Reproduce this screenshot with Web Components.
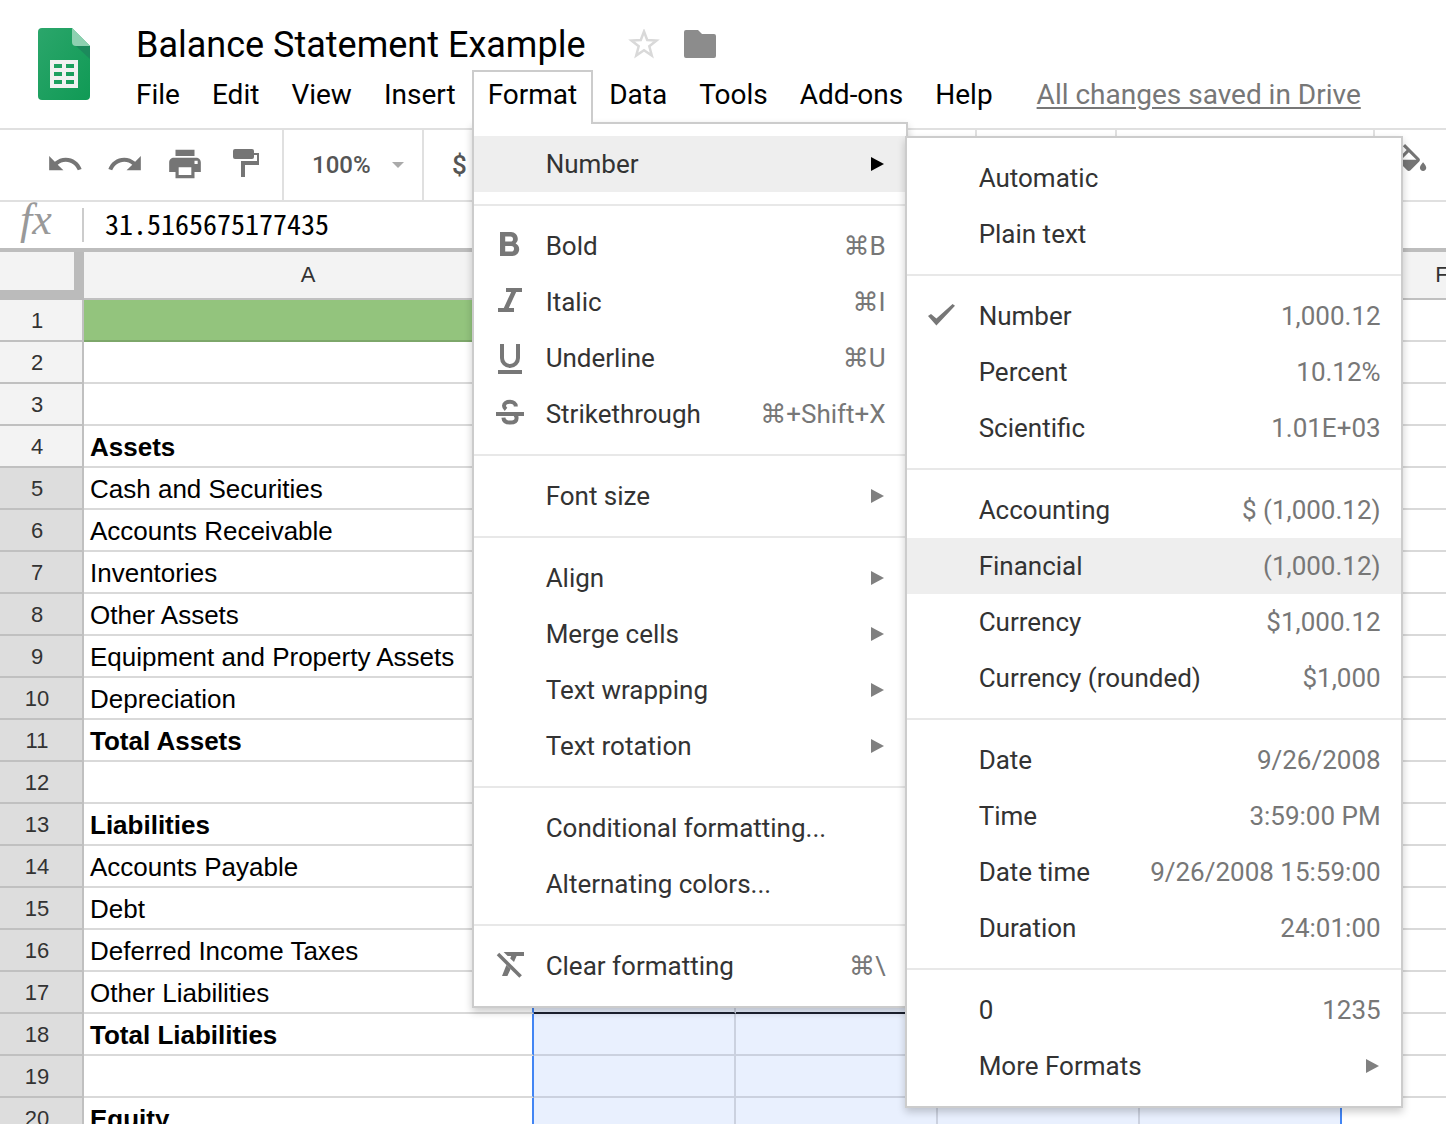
<!DOCTYPE html>
<html lang="en">
<head>
<meta charset="utf-8">
<title>Balance Statement Example</title>
<style>
  html, body {
    height: 100%;
    margin: 0;
  }
  body {
    overflow: hidden;
    background: #fff;
    color: #000;
    font-family: Roboto, "Liberation Sans", sans-serif;
  }
</style>
</head>
<body>
<sheet-app>
  <doc-header slot="header" name="Balance Statement Example">
    <menu-tab label="File"></menu-tab>
    <menu-tab label="Edit"></menu-tab>
    <menu-tab label="View"></menu-tab>
    <menu-tab label="Insert"></menu-tab>
    <menu-tab label="Format" open>
      <popup-menu>
        <menu-item label="Number" submenu active>
          <popup-menu slot="submenu" wide>
            <menu-item label="Automatic"></menu-item>
            <menu-item label="Plain text"></menu-item>
            <menu-line></menu-line>
            <menu-item label="Number" hint="1,000.12" icon="check"></menu-item>
            <menu-item label="Percent" hint="10.12%"></menu-item>
            <menu-item label="Scientific" hint="1.01E+03"></menu-item>
            <menu-line></menu-line>
            <menu-item label="Accounting" hint="$ (1,000.12)"></menu-item>
            <menu-item label="Financial" hint="(1,000.12)" active></menu-item>
            <menu-item label="Currency" hint="$1,000.12"></menu-item>
            <menu-item label="Currency (rounded)" hint="$1,000"></menu-item>
            <menu-line></menu-line>
            <menu-item label="Date" hint="9/26/2008"></menu-item>
            <menu-item label="Time" hint="3:59:00 PM"></menu-item>
            <menu-item label="Date time" hint="9/26/2008 15:59:00"></menu-item>
            <menu-item label="Duration" hint="24:01:00"></menu-item>
            <menu-line></menu-line>
            <menu-item label="0" hint="1235"></menu-item>
            <menu-item label="More Formats" submenu></menu-item>
          </popup-menu>
        </menu-item>
        <menu-line></menu-line>
        <menu-item label="Bold" hint="⌘B" icon="bold"></menu-item>
        <menu-item label="Italic" hint="⌘I" icon="italic"></menu-item>
        <menu-item label="Underline" hint="⌘U" icon="underline"></menu-item>
        <menu-item label="Strikethrough" hint="⌘+Shift+X" icon="strike"></menu-item>
        <menu-line></menu-line>
        <menu-item label="Font size" submenu></menu-item>
        <menu-line></menu-line>
        <menu-item label="Align" submenu></menu-item>
        <menu-item label="Merge cells" submenu></menu-item>
        <menu-item label="Text wrapping" submenu></menu-item>
        <menu-item label="Text rotation" submenu></menu-item>
        <menu-line></menu-line>
        <menu-item label="Conditional formatting..."></menu-item>
        <menu-item label="Alternating colors..."></menu-item>
        <menu-line></menu-line>
        <menu-item label="Clear formatting" hint="⌘\" icon="clear"></menu-item>
      </popup-menu>
    </menu-tab>
    <menu-tab label="Data"></menu-tab>
    <menu-tab label="Tools"></menu-tab>
    <menu-tab label="Add-ons"></menu-tab>
    <menu-tab label="Help"></menu-tab>
  </doc-header>
  <tool-bar slot="toolbar"></tool-bar>
  <formula-bar slot="formula" value="31.5165675177435"></formula-bar>
  <sheet-grid></sheet-grid>
</sheet-app>

<script>
const svg = (box, body) => `<svg viewBox="0 0 ${box} ${box}" aria-hidden="true">${body}</svg>`

const ICONS = {
  bold: svg(18, '<path d="M11.8 7.7c.6-.5 1.1-1.2 1.1-2.2 0-2-1.5-3.5-3.4-3.5H4v12h6.2c1.9 0 3.4-1.6 3.4-3.4 0-1.4-.7-2.4-1.8-2.900zM6.600 4.200h2.600a1.300 1.300 0 0 1 0 2.600H6.600zm3 7.600h-3V9h3a1.400 1.400 0 0 1 0 2.800z"/>'),
  italic: svg(18, '<path d="M7 2v2h2.600l-3.700 8H3v2h8v-2H8.400l3.700-8H15V2z"/>'),
  underline: svg(18, '<path d="M5 2v7a4 4 0 0 0 8 0V2" fill="none" stroke="currentColor" stroke-width="2"/><path d="M3 15h12v2H3z"/>'),
  strike: svg(18, '<path d="M11.900 5.200C11.900 3.700 10.700 2.900 9 2.900 7.200 2.900 6 3.700 6 4.900c0 .8.4 1.300 1 1.800M11.500 9.500c.5.4.8.9.8 1.500 0 1.500-1.300 2.300-3.200 2.300-2.200 0-3.300-1-3.400-2.500" fill="none" stroke="currentColor" stroke-width="2"/><path d="M2 8h14v2H2z"/>'),
  clear: svg(18, '<path d="M5.800 2H16v2h-3.700L11 7 9.100 5.200 9.600 4H7.800zM7.200 8.500 9.300 10.500 7.700 14H5z"/><path d="m3 3 11.300 11.300" fill="none" stroke="currentColor" stroke-width="1.800"/>'),
  check: svg(18, '<path d="M1.500 9 3 8l2.700 2.300L13.800 3l1.200.9-9.300 9.900z"/>'),
  undo: svg(24, '<path d="M12.500 8c-2.650 0-5.050 1-6.900 2.600L2 7v9h9l-3.600-3.600c1.400-1.200 3.100-1.900 5.100-1.900 3.500 0 6.500 2.300 7.600 5.500l2.400-.8C21.100 11 17.100 8 12.500 8z"/>'),
  redo: svg(24, '<path d="M18.400 10.600C16.500 9 14.100 8 11.500 8c-4.600 0-8.600 3-10 7.200l2.400.8c1.100-3.200 4.100-5.500 7.600-5.500 2 0 3.700.7 5.100 1.900L13 16h9V7z"/>'),
  print: svg(24, '<path d="M19 8H5c-1.700 0-3 1.300-3 3v6h4v4h12v-4h4v-6c0-1.700-1.300-3-3-3zm-3 11H8v-5h8zm3-7c-.6 0-1 0-1 0v-2h2v2zM18 3H6v4h12z"/>'),
  paint: svg(19, '<rect x="3.500" y="2" width="10.500" height="5" rx="1"/><path d="M13.500 4h3v6h-7v6h-2V8h8V5h-2z"/>'),
  fill: svg(24, '<path d="M16.560 8.940 7.620 0 6.210 1.410l2.380 2.380-5.150 5.150c-.59.590-.59 1.540 0 2.120l5.500 5.500c.290.290.680.440 1.060.440s.770-.150 1.060-.440l5.500-5.500c.590-.580.590-1.530 0-2.120zM5.210 10 10 5.210 14.790 10zM19 11.500s-2 2.170-2 3.500c0 1.100.9 2 2 2s2-.9 2-2c0-1.330-2-3.500-2-3.500z"/>')
}

const LOGO = `
  <svg class="logo" viewBox="0 0 52 72" role="img" aria-label="Sheets">
    <defs>
      <linearGradient id="page" x1="0" y1="0" x2="1" y2="1">
        <stop offset="0" stop-color="#2ba66b"/><stop offset="1" stop-color="#109a55"/>
      </linearGradient>
    </defs>
    <path fill="url(#page)" d="M4 0h30l18 18v50a4 4 0 0 1-4 4H4a4 4 0 0 1-4-4V4a4 4 0 0 1 4-4z"/>
    <path fill="#1c8a5c" d="M38 18h14v13z"/>
    <path fill="#8ed1b1" d="M34 0l18 18H38a4 4 0 0 1-4-4z"/>
    <path fill="#f1f1f1" fill-rule="evenodd" d="M12 32h28v28H12zm4 4v4h8v-4zm12 0v4h8v-4zm-12 8v4h8v-4zm12 0v4h8v-4zm-12 8v4h8v-4zm12 0v4h8v-4z"/>
  </svg>`

class SheetApp extends HTMLElement {
  constructor () {
    super()
    this.attachShadow({mode: 'open'}).innerHTML = `
      <style>
        :host { display: flex; flex-direction: column; height: 100vh; overflow: hidden; }
        .top { position: relative; z-index: 1; }
        main { flex: 1; min-height: 0; overflow: hidden; }
      </style>
      <div class="top"><slot name="header"></slot></div>
      <slot name="toolbar"></slot>
      <slot name="formula"></slot>
      <main><slot></slot></main>
    `
  }
}

class DocHeader extends HTMLElement {
  constructor () {
    super()
    this.attachShadow({mode: 'open'}).innerHTML = `
      <style>
        :host { display: flex; gap: 30px; height: 128px; padding-left: 38px; box-sizing: border-box; }
        .logo { width: 52px; height: 72px; margin-top: 28px; flex: none; }
        .title { display: flex; align-items: center; height: 42px; padding: 24px 0 4px 16px; }
        h1 { margin: 0 43px 0 0; font-size: 36px; line-height: 42px; font-weight: 400; white-space: nowrap; }
        .title button { display: flex; padding: 0; border: 0; background: none; margin-right: 24px; }
        .title svg { width: 32px; height: 32px; }
        nav { display: flex; align-items: flex-start; white-space: nowrap; }
        a { margin-left: 28px; color: #777; font-size: 28px; line-height: 50px; text-underline-offset: 3px; }
      </style>
      ${LOGO}
      <div>
        <div class="title">
          <h1></h1>
          <button aria-label="Star">
            <svg viewBox="0 0 32 32"><path fill="none" stroke="#d9d9d9" stroke-width="2.500" d="m16 2.500 3.200 8.500 9.300.5-7.200 5.800 2.500 9.200-7.800-5.200-7.800 5.200 2.500-9.200-7.200-5.800 9.300-.5z"/></svg>
          </button>
          <button aria-label="Move to folder">
            <svg viewBox="0 0 32 32"><path fill="#8c8c8c" d="M2 1h12l4 4h12a2 2 0 0 1 2 2v20a2 2 0 0 1-2 2H2a2 2 0 0 1-2-2V3a2 2 0 0 1 2-2z"/></svg>
          </button>
        </div>
        <nav><slot></slot><a href="#drive">All changes saved in Drive</a></nav>
      </div>
    `
  }

  connectedCallback () {
    this.shadowRoot.querySelector('h1').textContent = this.getAttribute('name')
  }
}

class MenuTab extends HTMLElement {
  constructor () {
    super()
    this.attachShadow({mode: 'open'}).innerHTML = `
      <style>
        :host { display: block; position: relative; }
        button {
          display: block; height: 54px; padding: 0 14px 6px; border: 2px solid transparent; border-bottom: 0;
          background: none; color: #000; font: 28px/46px Roboto, sans-serif;
        }
        :host([open]) button {
          position: relative; z-index: 2; background: #fff; border-color: #ccc;
        }
        /* the list tucks under the tab, which hides its top border */
        .drop { position: absolute; z-index: 1; left: 0; top: 52px; }
      </style>
      <button></button>
      <div class="drop"><slot></slot></div>
    `
  }

  connectedCallback () {
    const button = this.shadowRoot.querySelector('button')
    button.textContent = this.getAttribute('label')
    if (this.hasAttribute('open')) button.setAttribute('aria-expanded', 'true')
  }
}

class PopupMenu extends HTMLElement {
  constructor () {
    super()
    this.attachShadow({mode: 'open'}).innerHTML = `
      <style>
        :host {
          display: block; box-sizing: border-box; min-width: 436px; padding: 12px 0;
          border: 2px solid #ccc; background: #fff; box-shadow: 0 4px 8px rgba(0, 0, 0, .2);
        }
        :host([wide]) { min-width: 498px; }
      </style>
      <slot></slot>
    `
  }

  connectedCallback () {
    this.setAttribute('role', 'menu')
  }
}

class MenuLine extends HTMLElement {
  constructor () {
    super()
    this.attachShadow({mode: 'open'}).innerHTML = `
      <style>
        :host { display: block; height: 2px; margin: 12px 0; background: #e8e8e8; }
      </style>
    `
  }
}

class MenuItem extends HTMLElement {
  constructor () {
    super()
    this.attachShadow({mode: 'open'}).innerHTML = `
      <style>
        :host { display: block; position: relative; }
        button {
          display: flex; align-items: center; width: 100%; height: 56px; padding: 0 20px 0 18px;
          border: 0; background: none; color: #333; font: 26px/32px Roboto, "DejaVu Sans", sans-serif;
          text-align: left; white-space: nowrap;
        }
        :host([active]) button { background: #eee; }
        .icon { width: 36px; height: 36px; margin-right: 18px; color: #777; }
        svg { display: block; width: 100%; height: 100%; fill: currentColor; }
        .label { flex: 1; }
        .hint { color: #777; }
        .arrow {
          border: 7px solid transparent; border-left: 13px solid #808080; border-right: 0; margin-right: 2px;
        }
        :host([active]) .arrow { border-left-color: #000; }
        .sub { position: absolute; z-index: 3; left: 100%; top: 0; margin-left: -1px; }
      </style>
      <button role="menuitem"><span class="icon"></span><span class="label"></span></button>
      <div class="sub"><slot name="submenu"></slot></div>
    `
  }

  connectedCallback () {
    const button = this.shadowRoot.querySelector('button')
    button.querySelector('.icon').innerHTML = ICONS[this.getAttribute('icon')] || ''
    button.querySelector('.label').textContent = this.getAttribute('label')

    const tail = document.createElement('span')
    tail.className = this.hasAttribute('submenu') ? 'arrow' : 'hint'
    tail.textContent = this.getAttribute('hint') || ''
    button.appendChild(tail)
  }
}

class ToolBar extends HTMLElement {
  constructor () {
    super()
    this.attachShadow({mode: 'open'}).innerHTML = `
      <style>
        :host { display: flex; height: 70px; border: solid #e0e0e0; border-width: 2px 0; overflow: hidden; flex: none; color: #757575; }
        .group { display: flex; align-items: center; flex: none; border-right: 2px solid #e0e0e0; box-sizing: border-box; }
        .edit { gap: 22px; padding: 0 18px 2px 46px; }
        .zoom { width: 140px; padding-left: 28px; }
        .format { width: 553px; padding-left: 28px; }
        .size { width: 140px; }
        .style { width: 258px; }
        .color { border: 0; padding: 0 0 4px 18px; }
        button { display: block; padding: 0; border: 0; background: none; color: inherit; }
        svg { display: block; width: 38px; height: 38px; fill: currentColor; }
        .text { color: #555; font: 500 26px/32px Roboto, sans-serif; }
        select {
          appearance: none; width: 94px; padding: 0; border: 0; background: none;
          color: #555; font: 500 24px/32px Roboto, sans-serif;
        }
        .caret { margin-left: -14px; border: 6px solid transparent; border-top-color: #aaa; border-bottom: 0; pointer-events: none; }
      </style>
      <div class="group edit">
        <button aria-label="Undo">${ICONS.undo}</button>
        <button aria-label="Redo">${ICONS.redo}</button>
        <button aria-label="Print">${ICONS.print}</button>
        <button aria-label="Paint format">${ICONS.paint}</button>
      </div>
      <div class="group zoom">
        <select aria-label="Zoom"><option>100%</option></select><span class="caret"></span>
      </div>
      <div class="group format"><button class="text" aria-label="Format as currency">$</button></div>
      <div class="group size"></div>
      <div class="group style"></div>
      <div class="group color"><button aria-label="Fill color">${ICONS.fill}</button></div>
    `
  }
}

class FormulaBar extends HTMLElement {
  constructor () {
    super()
    this.attachShadow({mode: 'open'}).innerHTML = `
      <style>
        :host { display: flex; align-items: center; height: 46px; border-bottom: 4px solid #bdbdbd; flex: none; }
        label {
          width: 82px; height: 34px; border-right: 2px solid #ccc;
          text-indent: 20px; color: #999; font: italic 44px/24px "Liberation Serif", serif;
        }
        input {
          flex: 1; height: 46px; box-sizing: border-box; padding: 0 0 4px 21px; border: 0; outline: 0;
          background: none; color: #000; font: 28px/40px "Noto Sans Mono CJK SC", "DejaVu Sans Mono", monospace;
        }
      </style>
      <label for="fx">fx</label><input id="fx" type="text">
    `
  }

  connectedCallback () {
    this.shadowRoot.querySelector('input').value = this.getAttribute('value')
  }
}

const COLUMNS = ['A', 'B', 'C', 'D', 'E', 'F']
const ROWS = [
  '', '', '', '*Assets', 'Cash and Securities', 'Accounts Receivable', 'Inventories', 'Other Assets',
  'Equipment and Property Assets', 'Depreciation', '*Total Assets', '', '*Liabilities', 'Accounts Payable',
  'Debt', 'Deferred Income Taxes', 'Other Liabilities', '*Total Liabilities', '', '*Equity'
]

class SheetGrid extends HTMLElement {
  constructor () {
    super()
    this.attachShadow({mode: 'open'}).innerHTML = `
      <style>
        :host { display: block; font-family: "Liberation Sans", Arial, sans-serif; }
        table { width: 1544px; table-layout: fixed; border-collapse: separate; border-spacing: 0; }
        col { width: 202px; }
        col.num { width: 84px; }
        col.first { width: 450px; }
        th, td { box-sizing: border-box; height: 42px; padding: 0; border: solid #d9d9d9; border-width: 0 2px 2px 0; white-space: nowrap; }
        th { border-color: #c0c0c0; background: #f3f3f3; color: #333; font-size: 22px; line-height: 26px; font-weight: 400; }
        thead th { height: 48px; }
        thead td { border: solid #bbb; border-width: 0 10px 10px 0; background: #f3f3f3; }
        tbody th { padding: 2px 8px 0 0; }
        thead th.on, tr.on th { background: #ddd; }
        tbody td { padding: 2px 0 0 6px; font-size: 26px; line-height: 30px; }
        td:nth-child(2) { border-right-color: transparent; }
        tr.fill td:not(:last-child) { background: #93c47d; border-color: #7da76a; }
        tr.fill td:nth-child(2) { border-right-color: #93c47d; }
        tr.on td:nth-child(2) { border-right-color: #4285f4; }
        tr.on td:nth-child(n + 3):nth-child(-n + 6) { background: #e9f0fe; border-color: #cbd1df; }
        tr.on.total td:nth-child(n + 3):nth-child(-n + 6) { border-bottom-color: #1c2130; }
        tr.on td:nth-child(6) { border-right-color: #4285f4 !important; }
      </style>
      <table>
        <colgroup><col class="num"><col class="first"><col span="5"></colgroup>
        <thead>
          <tr><td></td>${COLUMNS.map((name, i) => `<th scope="col" class="${i > 0 && i < 5 ? 'on' : ''}">${name}</th>`).join('')}</tr>
        </thead>
        <tbody>${ROWS.map((text, i) => this.row(text, i + 1)).join('')}</tbody>
      </table>
    `
  }

  row (text, n) {
    const cls = [n === 1 && 'fill', n > 4 && 'on', n === 17 && 'total'].filter(Boolean).join(' ')
    const cell = text.startsWith('*') ? `<b>${text.slice(1)}</b>` : text
    return `<tr class="${cls}"><th scope="row">${n}</th><td>${cell}</td>${'<td></td>'.repeat(5)}</tr>`
  }
}

customElements.define('sheet-app', SheetApp)
customElements.define('doc-header', DocHeader)
customElements.define('menu-tab', MenuTab)
customElements.define('popup-menu', PopupMenu)
customElements.define('menu-line', MenuLine)
customElements.define('menu-item', MenuItem)
customElements.define('tool-bar', ToolBar)
customElements.define('formula-bar', FormulaBar)
customElements.define('sheet-grid', SheetGrid)
</script>
</body>
</html>
